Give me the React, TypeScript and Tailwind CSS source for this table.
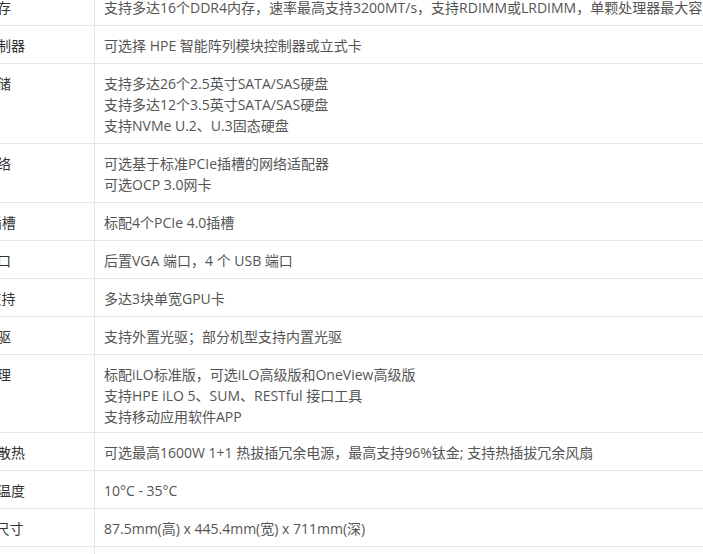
import React from "react";

const rows: { label: string; lines: string[]; tight?: boolean }[] = [
  {
    label: "最大内存",
    lines: [
      "支持多达16个DDR4内存，速率最高支持3200MT/s，支持RDIMM或LRDIMM，单颗处理器最大容量2TB",
    ],
  },
  { label: "存储控制器", lines: ["可选择 HPE 智能阵列模块控制器或立式卡"] },
  {
    label: "内部存储",
    lines: [
      "支持多达26个2.5英寸SATA/SAS硬盘",
      "支持多达12个3.5英寸SATA/SAS硬盘",
      "支持NVMe U.2、U.3固态硬盘",
    ],
  },
  {
    label: "板载网络",
    lines: ["可选基于标准PCIe插槽的网络适配器", "可选OCP 3.0网卡"],
  },
  { label: "PCIe 插槽", lines: ["标配4个PCIe 4.0插槽"] },
  { label: "外部端口", lines: ["后置VGA 端口，4 个 USB 端口"] },
  { label: "GPU 支持", lines: ["多达3块单宽GPU卡"] },
  { label: "外置光驱", lines: ["支持外置光驱；部分机型支持内置光驱"] },
  {
    label: "系统管理",
    lines: [
      "标配iLO标准版，可选iLO高级版和OneView高级版",
      "支持HPE iLO 5、SUM、RESTful 接口工具",
      "支持移动应用软件APP",
    ],
    tight: true,
  },
  {
    label: "电源与散热",
    lines: [
      "可选最高1600W 1+1 热拔插冗余电源，最高支持96%钛金; 支持热插拔冗余风扇",
    ],
  },
  { label: "运行时温度", lines: ["10°C - 35°C"] },
  { label: "外形 / 尺寸", lines: ["87.5mm(高) x 445.4mm(宽) x 711mm(深)"] },
  { label: "整机重量", lines: ["约 15.3kg"] },
];

export default function App() {
  return (
    <div
      className="w-[703px] h-[554px] overflow-hidden bg-white"
      style={{ fontFamily: '"Open Sans", "Noto Sans CJK SC", sans-serif' }}
    >
      <div className="-ml-[54px] -mt-[12px] w-[1000px] text-[14px] leading-[21px]">
        {rows.map((r, i) => (
          <div
            key={i}
            className={
              r.tight
                ? "flex border-b border-[#e6e6e6] pb-0"
                : "flex border-b border-[#e6e6e6]"
            }
          >
            <div
              className={
                r.tight
                  ? "w-[149px] shrink-0 border-r border-[#e6e6e6] pl-[9px] pt-[9px] pb-[5px] text-[#333333] whitespace-nowrap overflow-hidden"
                  : "w-[149px] shrink-0 border-r border-[#e6e6e6] pl-[9px] pt-[9px] pb-[7px] text-[#333333] whitespace-nowrap overflow-hidden"
              }
            >
              {r.label}
            </div>
            <div
              className={
                r.tight
                  ? "flex-1 pl-[9px] pt-[9px] pb-[5px] text-[#555555] whitespace-nowrap"
                  : "flex-1 pl-[9px] pt-[9px] pb-[7px] text-[#555555] whitespace-nowrap"
              }
            >
              {r.lines.map((l, j) => (
                <div key={j}>{l}</div>
              ))}
            </div>
          </div>
        ))}
      </div>
    </div>
  );
}
